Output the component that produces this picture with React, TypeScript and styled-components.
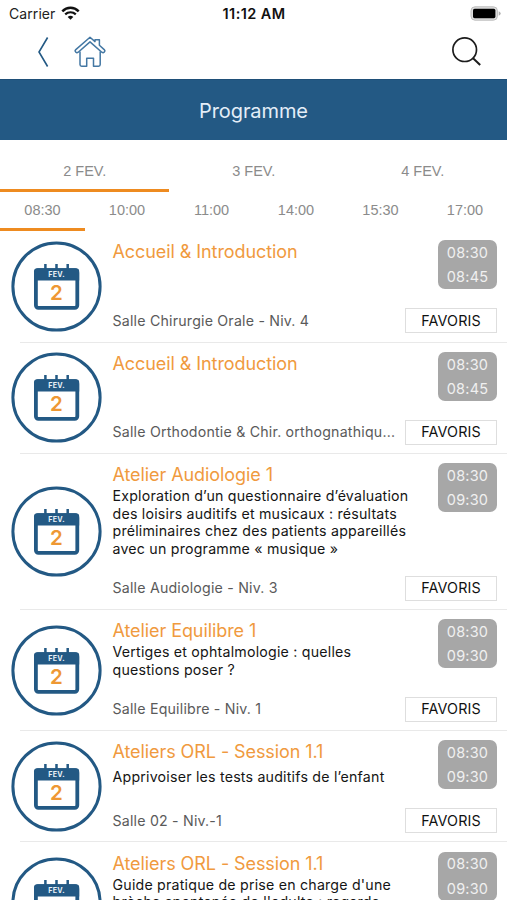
import React from "react";
import styled, { createGlobalStyle } from "styled-components";

const BLUE = "#235984";
const ORANGE = "#f09a3e";

const GlobalStyle = createGlobalStyle`
  * { box-sizing: border-box; }
  html, body { margin: 0; padding: 0; background: #fff; overflow: hidden; }
  body { font-family: Inter, "Liberation Sans", sans-serif; }
`;

const Screen = styled.div`
  width: 507px;
  height: 900px;
  overflow: hidden;
  display: flex;
  flex-direction: column;
  background: #fff;
`;

const StatusBar = styled.header`
  flex: none;
  height: 27px;
  display: grid;
  grid-template-columns: 1fr auto 1fr;
  align-items: center;
  padding: 0 6px 0 9px;
  color: #222;
  font-size: 14px;
`;

const Carrier = styled.div`
  display: flex;
  align-items: center;
  gap: 6px;
  letter-spacing: 0.08px;
`;

const Clock = styled.div`
  font-weight: 600;
  font-size: 14.5px;
  color: #111;
  letter-spacing: 0.4px;
  margin-right: 2px;
`;

const BatterySlot = styled.div`
  display: flex;
  justify-content: flex-end;
`;

const NavBar = styled.nav`
  flex: none;
  height: 52px;
  display: flex;
  align-items: flex-start;
  padding: 9px 25px 0 37px;
`;

const IconButton = styled.button<{ $ml?: number | "auto" }>`
  border: 0;
  padding: 0;
  background: none;
  display: flex;
  margin-left: ${({ $ml = 0 }) => ($ml === "auto" ? "auto" : `${$ml}px`)};
`;

const TitleBar = styled.h1`
  flex: none;
  margin: 0;
  height: 61px;
  padding-top: 1px;
  display: flex;
  align-items: center;
  justify-content: center;
  background: ${BLUE};
  border-top: 1px solid #1f4f78;
  color: #e4eef8;
  font-size: 20px;
  font-weight: 400;
  letter-spacing: -0.1px;
`;

const Tabs = styled.div<{ $height: number }>`
  flex: none;
  display: flex;
  height: ${({ $height }) => $height}px;
`;

const Tab = styled.button<{ $active?: boolean; $top: number }>`
  flex: 1 1 0;
  border: 0;
  border-bottom: 3px solid ${({ $active }) => ($active ? "#ee8b20" : "transparent")};
  padding: ${({ $top }) => $top}px 0 0 0.5px;
  background: none;
  color: #8b8b8b;
  font: 400 14.5px/17px "Liberation Sans", sans-serif;
  display: flex;
  justify-content: center;
`;

const List = styled.main`
  flex: none;
  display: flex;
  flex-direction: column;
  padding-top: 0.4px;
`;

const Row = styled.article`
  display: grid;
  grid-template-columns: 91px 1fr 92px;
  column-gap: 10.5px;
  min-height: 111.55px;
  padding: 0 10px 0 11px;
  background: linear-gradient(#e9e9e9, #e9e9e9) 20px 100% / 100% 1.4px no-repeat;
`;

const DateDisc = styled.div`
  align-self: center;
  height: 91px;
  margin-bottom: 1.6px;
  display: flex;
`;

const Body = styled.div`
  min-width: 0;
  display: flex;
  flex-direction: column;
  padding: 10px 0 10px;
`;

const Title = styled.h2`
  margin: 0;
  height: 23px;
  line-height: 22px;
  font-size: 18px;
  font-weight: 400;
  letter-spacing: -0.08px;
  color: ${ORANGE};
  white-space: nowrap;
`;

const Description = styled.p`
  margin: 0 -60px 0 0;
  flex: 1;
  display: flex;
  flex-direction: column;
  justify-content: center;
  font-size: 14.2px;
  line-height: 17.4px;
  letter-spacing: 0.21px;
  color: #151515;
  white-space: nowrap;
`;

const Room = styled.div`
  margin-top: 19.2px;
  height: 24px;
  line-height: 24px;
  font-size: 14.2px;
  letter-spacing: 0.2px;
  color: #5a5a5a;
  white-space: nowrap;
`;

const Side = styled.div`
  display: flex;
  flex-direction: column;
  align-items: flex-end;
  justify-content: space-between;
  padding: 9px 0 9.5px;
`;

const TimeBadge = styled.div`
  width: 59px;
  height: 49px;
  padding-top: 1px;
  border-radius: 7px;
  background: #a7a7a7;
  color: #f0f0f0;
  display: flex;
  flex-direction: column;
  align-items: center;
  justify-content: center;
  font-size: 14.5px;
  line-height: 24.4px;
  letter-spacing: 0.2px;
`;

const Favorite = styled.button`
  width: 92px;
  height: 25px;
  padding: 0;
  border: 1.5px solid #dedede;
  background: #fff;
  color: #111;
  font: 400 14.3px/20px Inter, sans-serif;
  letter-spacing: 0.15px;
`;

const WifiIcon = () => (
  <svg width="19" height="15" viewBox="0 0 19 15" fill="none">
    <path d="M1.3 5.3C6 .6 13 .6 17.7 5.3" stroke="#111" strokeWidth="2.5" />
    <path d="M4.2 8.4C7.2 5.5 11.8 5.5 14.8 8.4" stroke="#111" strokeWidth="2.2" />
    <path d="M6.7 10.9C8.3 9.5 10.7 9.5 12.3 10.9L9.5 13.8Z" fill="#111" />
  </svg>
);

const BatteryIcon = () => (
  <svg width="31" height="15" viewBox="0 0 31 15">
    <rect x="1" y=".8" width="26.4" height="13.4" rx="4" fill="#dedede" stroke="#bdbdbd" />
    <rect x="3" y="2.8" width="22.4" height="9.4" rx="1.6" fill="#000" />
    <path d="M28.7 5.2q2 .7 2 2.3t-2 2.3z" fill="#b0b0b0" />
  </svg>
);

const BackIcon = () => (
  <svg width="12" height="32" viewBox="0 0 12 32" fill="none" stroke={BLUE} strokeWidth="1.6">
    <path d="M10.6 1.5L2 16l8.6 14.5" />
  </svg>
);

const HomeIcon = () => (
  <svg width="32" height="32" viewBox="0 0 32 32" fill="none" stroke="#4377a3" strokeWidth="1.5" strokeLinejoin="round">
    <path d="M16 1.3L21 5.6V3.8H25.4V9.3L30.2 13.6C31.9 15.2 29.6 17.7 27.8 16.2L16 5.9L4.2 16.2C2.4 17.7.1 15.2 1.8 13.6Z" />
    <path d="M6 15.4V28.6Q6 30.2 7.6 30.2H12.7V22.2H19.5V30.2H24.6Q26.2 30.2 26.2 28.6V15.4" />
  </svg>
);

const SearchIcon = () => (
  <svg width="31" height="31" viewBox="0 0 31 31" fill="none" stroke="#1c1c1c" strokeWidth="1.7">
    <circle cx="13.7" cy="13.7" r="11.8" />
    <path d="M21.8 22L29.2 29" strokeWidth="2" />
  </svg>
);

const CalendarIcon = () => (
  <svg width="91" height="91" viewBox="0 0 91 91">
    <circle cx="45.5" cy="45.5" r="43.6" fill="#fff" stroke={BLUE} strokeWidth="3" />
    <path d="M34.4 23v6M45.5 23v6M56.7 23v6" stroke={BLUE} strokeWidth="2.5" />
    <rect x="24.9" y="29.2" width="41.4" height="37.6" rx="2.5" fill="#fff" stroke={BLUE} strokeWidth="3.8" />
    <path d="M23 39.5V30.6q0-3.3 3.3-3.3h38.6q3.3 0 3.3 3.3v8.9z" fill={BLUE} />
    <text x="45.6" y="36.2" textAnchor="middle" fill="#e8f1f8" fontFamily="Inter, sans-serif" fontSize="7.2" fontWeight="700" letterSpacing=".3">
      FEV.
    </text>
    <text x="45.5" y="58.8" textAnchor="middle" fill="#ee9833" fontFamily="Inter, sans-serif" fontSize="20.5" fontWeight="600">
      2
    </text>
  </svg>
);

const days = ["2 FEV.", "3 FEV.", "4 FEV."];
const hours = ["08:30", "10:00", "11:00", "14:00", "15:30", "17:00"];

type Session = { title: string; lines: string[]; room: string; start: string; end: string };

const sessions: Session[] = [
  { title: "Accueil & Introduction", lines: [], room: "Salle Chirurgie Orale - Niv. 4", start: "08:30", end: "08:45" },
  { title: "Accueil & Introduction", lines: [], room: "Salle Orthodontie & Chir. orthognathiqu...", start: "08:30", end: "08:45" },
  {
    title: "Atelier Audiologie 1",
    lines: [
      "Exploration d’un questionnaire d’évaluation",
      "des loisirs auditifs et musicaux : résultats",
      "préliminaires chez des patients appareillés",
      "avec un programme « musique »",
    ],
    room: "Salle Audiologie - Niv. 3",
    start: "08:30",
    end: "09:30",
  },
  {
    title: "Atelier Equilibre 1",
    lines: ["Vertiges et ophtalmologie : quelles", "questions poser ?"],
    room: "Salle Equilibre - Niv. 1",
    start: "08:30",
    end: "09:30",
  },
  { title: "Ateliers ORL - Session 1.1", lines: ["Apprivoiser les tests auditifs de l’enfant"], room: "Salle 02 - Niv.-1", start: "08:30", end: "09:30" },
  {
    title: "Ateliers ORL - Session 1.1",
    lines: ["Guide pratique de prise en charge d'une", "brèche spontanée de l'adulte : regards"],
    room: "Salle 03 - Niv.-1",
    start: "08:30",
    end: "09:30",
  },
];

export default function App() {
  return (
    <>
      <GlobalStyle />
      <Screen>
        <StatusBar>
          <Carrier>
            Carrier
            <WifiIcon />
          </Carrier>
          <Clock>11:12 AM</Clock>
          <BatterySlot>
            <BatteryIcon />
          </BatterySlot>
        </StatusBar>
        <NavBar>
          <IconButton aria-label="Retour">
            <BackIcon />
          </IconButton>
          <IconButton $ml={25} aria-label="Accueil">
            <HomeIcon />
          </IconButton>
          <IconButton $ml="auto" aria-label="Rechercher">
            <SearchIcon />
          </IconButton>
        </NavBar>
        <TitleBar>Programme</TitleBar>
        <Tabs $height={52}>
          {days.map((d, i) => (
            <Tab key={d} $active={i === 0} $top={23}>
              {d}
            </Tab>
          ))}
        </Tabs>
        <Tabs $height={39}>
          {hours.map((h, i) => (
            <Tab key={h} $active={i === 0} $top={10}>
              {h}
            </Tab>
          ))}
        </Tabs>
        <List>
          {sessions.map((s, i) => (
            <Row key={i}>
              <DateDisc>
                <CalendarIcon />
              </DateDisc>
              <Body>
                <Title>{s.title}</Title>
                <Description>
                  {s.lines.map((l) => (
                    <span key={l}>{l}</span>
                  ))}
                </Description>
                <Room>{s.room}</Room>
              </Body>
              <Side>
                <TimeBadge>
                  <span>{s.start}</span>
                  <span>{s.end}</span>
                </TimeBadge>
                <Favorite>FAVORIS</Favorite>
              </Side>
            </Row>
          ))}
        </List>
      </Screen>
    </>
  );
}
